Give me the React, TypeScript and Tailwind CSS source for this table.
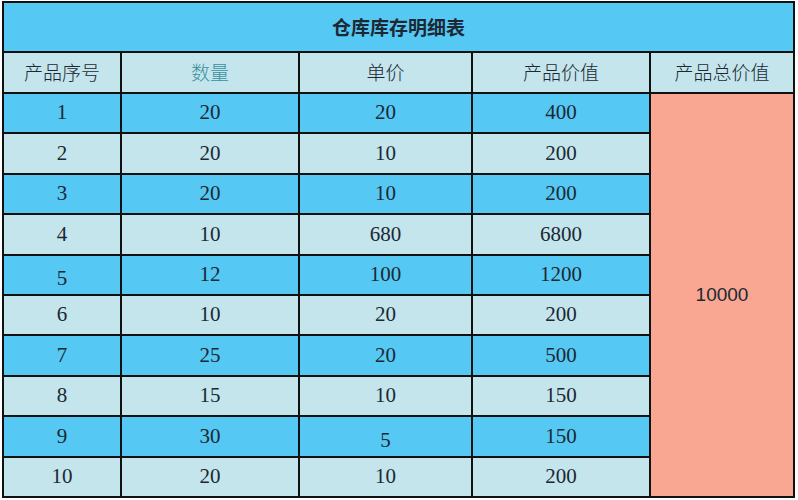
import React from 'react';

interface Row {
  id: string;
  qty: string;
  price: string;
  value: string;
}

const rows: Row[] = [
  { id: '1', qty: '20', price: '20', value: '400' },
  { id: '2', qty: '20', price: '10', value: '200' },
  { id: '3', qty: '20', price: '10', value: '200' },
  { id: '4', qty: '10', price: '680', value: '6800' },
  { id: '5', qty: '12', price: '100', value: '1200' },
  { id: '6', qty: '10', price: '20', value: '200' },
  { id: '7', qty: '25', price: '20', value: '500' },
  { id: '8', qty: '15', price: '10', value: '150' },
  { id: '9', qty: '30', price: '5', value: '150' },
  { id: '10', qty: '20', price: '10', value: '200' },
];

const serif = { fontFamily: '"Liberation Serif", "Noto Sans CJK SC", serif' };

// the lone "5" cells sit a few px low in the source sheet
const Num: React.FC<{ v: string }> = ({ v }) => (
  <span className={v === '5' ? 'inline-block translate-y-1' : 'inline-block'}>{v}</span>
);

export default function App() {
  return (
    <div className="w-[798px] h-[500px] bg-white pt-px pl-[2px]" style={serif}>
      <table className="w-[791px] border-collapse text-[#1c2833] table-fixed">
        <colgroup>
          <col className="w-[118px]" />
          <col className="w-[178px]" />
          <col className="w-[173px]" />
          <col className="w-[178px]" />
          <col className="w-[144px]" />
        </colgroup>
        <tbody>
          <tr className="h-[50px]">
            <td
              colSpan={5}
              className="border-2 border-[#111] bg-[#55c8f4] text-center text-[19px] font-bold"
              style={{ fontFamily: '"Noto Sans CJK SC", sans-serif' }}
            >
              仓库库存明细表
            </td>
          </tr>
          <tr className="h-[41px] bg-[#c4e5ec] text-[19px]" style={{ fontFamily: '"Noto Sans CJK SC", sans-serif', fontWeight: 300 }}>
            <td className="border-2 border-[#111] text-center">产品序号</td>
            <td className="border-2 border-[#111] text-center text-[#3b8fa0]">数量</td>
            <td className="border-2 border-[#111] text-center">单价</td>
            <td className="border-2 border-[#111] text-center">产品价值</td>
            <td className="border-2 border-[#111] text-center">产品总价值</td>
          </tr>
          {rows.map((r, i) => (
            <tr
              key={r.id}
              className={`h-[40.4px] text-[21px] ${i % 2 === 0 ? 'bg-[#55c8f4]' : 'bg-[#c4e5ec]'}`}
            >
              <td className="border-2 border-[#111] text-center"><Num v={r.id} /></td>
              <td className="border-2 border-[#111] text-center"><Num v={r.qty} /></td>
              <td className="border-2 border-[#111] text-center"><Num v={r.price} /></td>
              <td className="border-2 border-[#111] text-center"><Num v={r.value} /></td>
              {i === 0 && (
                <td rowSpan={10} className="border-2 border-[#111] bg-[#f9a792] text-center text-[19px]" style={{ fontFamily: '"Liberation Sans", sans-serif' }}>
                  10000
                </td>
              )}
            </tr>
          ))}
        </tbody>
      </table>
    </div>
  );
}
